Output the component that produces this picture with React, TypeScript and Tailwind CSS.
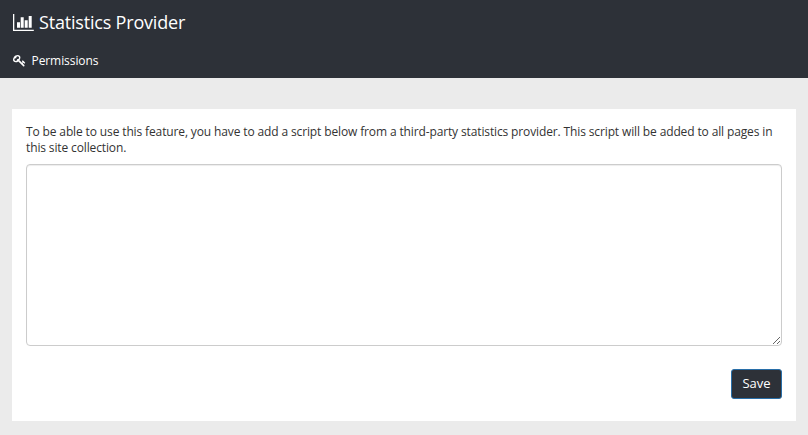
import React from "react";

function ChartIcon() {
  return (
    <svg width="21" height="18" viewBox="0 0 21 18" fill="currentColor" className="shrink-0">
      <path d="M0 1h1.3v15.7h19.5V18H0zM4 9.3h3v5.5H4zM7.7 4.2h3v10.6h-3zM11.7 7.2h3v7.6h-3zM15.7 3h3v11.8h-3z" />
    </svg>
  );
}

function KeyIcon() {
  return (
    <svg width="13" height="13" viewBox="0 0 1792 1792" fill="currentColor" className="mb-px shrink-0">
      <path d="M832 512q0-80-56-136t-136-56-136 56-56 136q0 42 19 83-41-19-83-19-80 0-136 56t-56 136 56 136 136 56 136-56 56-136q0-42-19-83 41 19 83 19 80 0 136-56t56-136zm851 704q0 17-49 66t-66 49q-9 0-28.5-16t-36.5-33-38.5-40-24.5-26l-96 96 220 220q28 28 28 68 0 42-39 81t-81 39q-40 0-68-28l-671-671q-176 131-365 131-163 0-265.5-102.5t-102.5-265.5q0-160 95-313t248-248 313-95q163 0 265.5 102.5t102.5 265.5q0 189-131 365l355 355 96-96q-3-3-26-24.5t-40-38.5-33-36.5-16-28.5q0-17 49-66t66-49q13 0 23 10 6 6 46 44.5t82 79.5 86.5 86 73 78 28.5 41z" />
    </svg>
  );
}

export default function App() {
  return (
    <div className="flex h-[435px] w-[808px] flex-col bg-[#ebebeb] font-['Open_Sans',sans-serif] text-[#333]">
      <header className="h-[78px] bg-[#2d3138] px-[13px] text-white">
        <h1 className="flex h-[44px] items-center gap-[5px] text-[18px] tracking-[-0.19px]">
          <ChartIcon />
          <span>Statistics Provider</span>
        </h1>
        <a className="flex h-[34px] items-center gap-[5.5px] text-[12px] tracking-[-0.08px]">
          <KeyIcon />
          <span>Permissions</span>
        </a>
      </header>
      <main className="mx-3 mt-[31px] flex h-[312px] flex-col bg-white px-[14px] pt-[15px]">
        <p className="text-[12px] leading-4 tracking-[-0.13px]">
          To be able to use this feature, you have to add a script below from a third-party statistics provider. This script will be added to all pages in this site collection.
        </p>
        <textarea className="mt-2 h-[182px] w-full shrink-0 resize rounded-[4px] border border-[#ccc] bg-white shadow-[inset_0_1px_1px_rgba(0,0,0,0.075)] outline-none" />
        <button className="mt-[23px] h-[30px] w-[51px] self-end rounded-[3px] border border-[#286ea8] bg-[#2d3138] text-[13px] text-white">
          Save
        </button>
      </main>
    </div>
  );
}
